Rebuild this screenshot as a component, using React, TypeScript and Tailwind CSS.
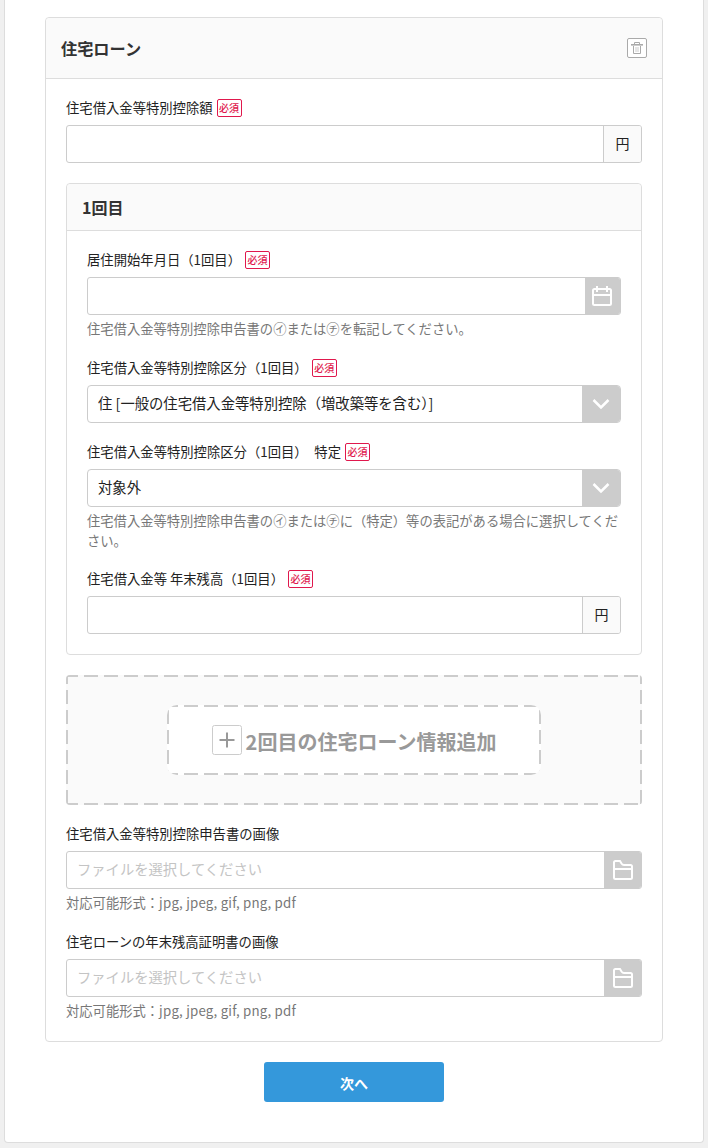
import type { ReactNode } from "react";

function Required() {
  return (
    <span className="ml-1 flex h-[18px] w-[25px] items-center justify-center rounded-xs border border-[#e0184d] text-[10px] font-medium text-[#e0184d]">
      <span className="-mt-px">必須</span>
    </span>
  );
}

function Label({ text, required = false }: { text: string; required?: boolean }) {
  return (
    <div className="flex h-[18px] items-center whitespace-pre text-[13.33px] text-[#222]">
      {text}
      {required && <Required />}
    </div>
  );
}

function Hint({ children }: { children: ReactNode }) {
  return <p className="mt-1 text-[13.3px] leading-5 text-[#777]">{children}</p>;
}

function YenField() {
  return (
    <div className="mt-2 flex h-[38px] rounded-[3px] border border-[#ccc] bg-white">
      <div className="flex-1" />
      <div className="flex w-[38px] items-center justify-center rounded-r-xs border-l border-[#ccc] bg-[#fafafa] pb-0.5 text-[14px] text-[#222]">
        円
      </div>
    </div>
  );
}

function DateField() {
  return (
    <div className="mt-2 flex h-[38px] overflow-hidden rounded-[3px] border border-[#ccc] bg-white">
      <div className="flex-1" />
      <div className="flex w-[35px] items-center bg-[#ccc] pl-[7px]">
        <svg width="20" height="20" viewBox="0 0 20 20" fill="none" stroke="#fff" strokeWidth="2">
          <rect x="1" y="3" width="18" height="16" rx="1.5" />
          <path d="M1 9h18M5 0v6M15 0v6" />
        </svg>
      </div>
    </div>
  );
}

function SelectField({ value }: { value: string }) {
  return (
    <div className="mt-2 flex h-[38px] overflow-hidden rounded-[4px] border border-[#ccc] bg-white">
      <div className="flex flex-1 items-center pb-0.5 pl-[10px] text-[14.33px] text-[#222]">{value}</div>
      <div className="flex w-[38px] items-center justify-center bg-[#ccc]">
        <svg width="18" height="12" viewBox="0 0 18 12" fill="none" stroke="#fff" strokeWidth="2.5">
          <path d="M1.5 2 9 9.5 16.5 2" />
        </svg>
      </div>
    </div>
  );
}

function FileField() {
  return (
    <div className="mt-2 flex h-[38px] overflow-hidden rounded-[3px] border border-[#ccc] bg-white">
      <div className="flex flex-1 items-center pb-0.5 pl-[10px] text-[14.3px] text-[#c4c4c4]">
        ファイルを選択してください
      </div>
      <div className="flex w-[37px] items-center justify-center bg-[#ccc]">
        <svg width="20" height="20" viewBox="0 0 20 20" fill="none" stroke="#fff" strokeWidth="2">
          <path d="M1 9V2.500Q1 1 2.500 1H7l1.500 2.500Q9.500 5 11 5h6.500Q19 5 19 6.500v11Q19 19 17.500 19h-15Q1 19 1 17.500V9h18" />
        </svg>
      </div>
    </div>
  );
}

function FileHint() {
  return (
    <Hint>
      対応可能形式：<span className="tracking-[0.2px]">jpg, jpeg, gif, png, pdf</span>
    </Hint>
  );
}

export default function App() {
  return (
    <div className="h-[1148px] bg-[#f0f0f0] pl-1 font-['Noto_Sans_CJK_JP',sans-serif] text-[#333]">
      <div className="h-[1143px] w-[700px] rounded-b border border-t-0 border-[#ddd] bg-white px-10 pt-[17px]">
        <section className="h-[1025px] rounded border border-[#ddd]">
          <header className="flex h-[61px] items-center justify-between rounded-t border-b border-[#ddd] bg-[#fafafa] px-[15px]">
            <h2 className="text-[16.2px] font-bold">住宅ローン</h2>
            <button className="flex size-5 items-center justify-center rounded-xs border border-[#aaa] bg-white">
              <svg width="12" height="12" viewBox="0 0 12 12" fill="none" stroke="#aaa">
                <path d="M0 2.500h12M3.500 2.500v-2h5v2M2.500 2.500v9h7v-9" />
                <path d="M0 3.500h12M5 5v5M7 5v5" stroke="#ccc" />
              </svg>
            </button>
          </header>

          <div className="px-5 pt-5">
            <Label text="住宅借入金等特別控除額" required />
            <YenField />

            <section className="mt-5 h-[472px] rounded border border-[#ddd]">
              <h3 className="flex h-[47px] items-center rounded-t border-b border-[#ddd] bg-[#fafafa] pl-[15px] text-[16px] font-bold">
                1回目
              </h3>
              <div className="px-5 pt-5">
                <Label text="居住開始年月日（1回目）" required />
                <DateField />
                <Hint>住宅借入金等特別控除申告書の㋑または㋠を転記してください。</Hint>

                <div className="mt-5">
                  <Label text="住宅借入金等特別控除区分（1回目）" required />
                  <SelectField value="住 [一般の住宅借入金等特別控除（増改築等を含む）]" />
                </div>

                <div className="mt-5">
                  <Label text="住宅借入金等特別控除区分（1回目）　特定" required />
                  <SelectField value="対象外" />
                  <Hint>住宅借入金等特別控除申告書の㋑または㋠に（特定）等の表記がある場合に選択してください。</Hint>
                </div>

                <div className="mt-[19px]">
                  <Label text="住宅借入金等 年末残高（1回目）" required />
                  <YenField />
                </div>
              </div>
            </section>

            <div className="relative mt-5 flex h-[130px] items-center justify-center overflow-hidden rounded bg-[#fafafa]">
              <svg className="absolute inset-0" width="576" height="130" stroke="#ccc" strokeWidth="2" strokeDasharray="14 6">
                <path d="M-2 1h580M-2 129h580M1 -5v140M575 -5v140" />
              </svg>
              <button className="relative flex h-[70px] w-[374px] items-center justify-center gap-1 overflow-hidden rounded-[10px] bg-white text-[#999]">
                <svg className="absolute inset-0" width="374" height="70" stroke="#ccc" strokeWidth="2" strokeDasharray="14 6">
                  <path d="M-3 1h380M-3 69h380M1 5v65M373 5v65" />
                </svg>
                <svg width="30" height="30" viewBox="0 0 30 30" fill="none">
                  <rect x="0.5" y="0.5" width="29" height="29" rx="2" stroke="#ccc" />
                  <path d="M7.500 15h15M15 7.500v15" stroke="#999" strokeWidth="2" />
                </svg>
                <span className="pt-1 text-[20px] font-bold">2回目の住宅ローン情報追加</span>
              </button>
            </div>

            <div className="mt-5">
              <Label text="住宅借入金等特別控除申告書の画像" />
              <FileField />
              <FileHint />
            </div>

            <div className="mt-5">
              <Label text="住宅ローンの年末残高証明書の画像" />
              <FileField />
              <FileHint />
            </div>
          </div>
        </section>

        <button className="mx-auto mt-5 flex h-10 w-[180px] items-center justify-center rounded-[3px] bg-[#3498db] pt-0.5 text-[14px] font-bold text-white">
          次へ
        </button>
      </div>
    </div>
  );
}
